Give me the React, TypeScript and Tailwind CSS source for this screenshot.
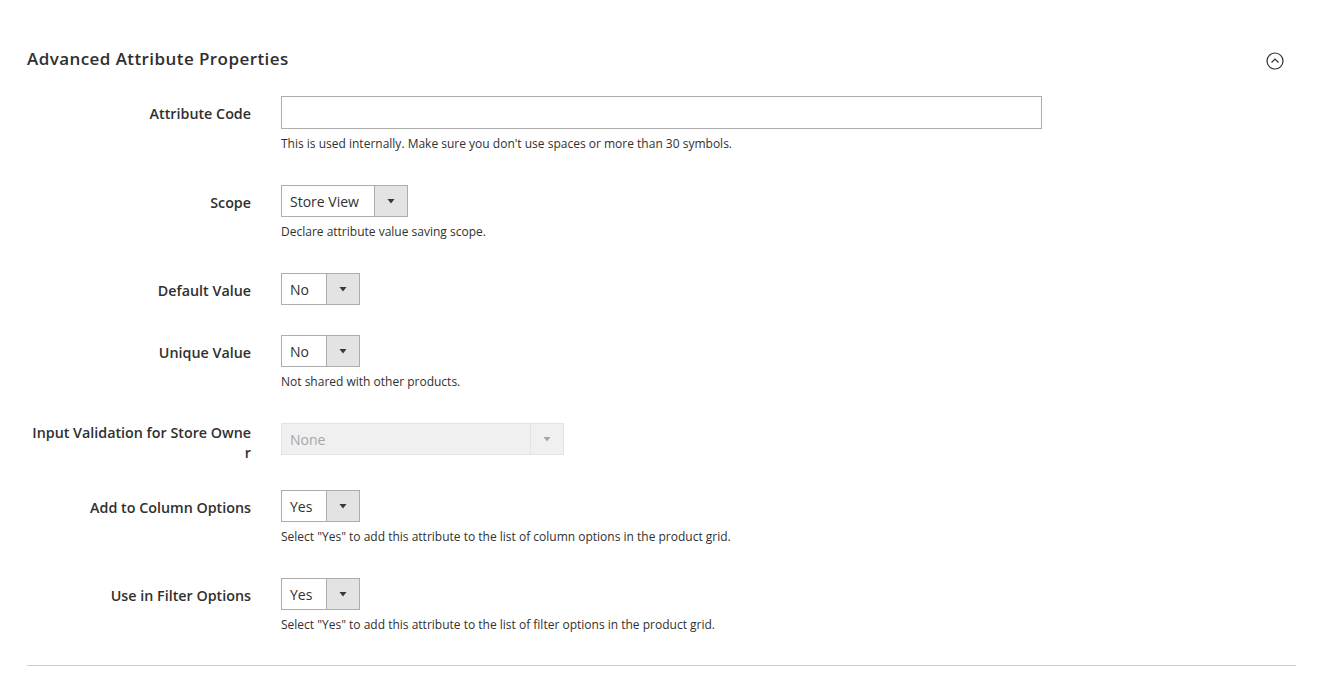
import React from 'react';

const font = { fontFamily: '"Open Sans", "Noto Sans", Arial, sans-serif' };

function Arrow({ disabled }: { disabled?: boolean }) {
  return (
    <svg width="8" height="5" viewBox="0 0 8 5" className="block">
      <path d="M0.5 0h7L4 4.5z" fill={disabled ? '#a6a6a6' : '#41362f'} />
    </svg>
  );
}

function Select({ value, textW, disabled }: { value: string; textW: string; disabled?: boolean }) {
  return (
    <div
      className={`flex h-[32px] border ${
        disabled ? 'border-[#e3e3e3] bg-[#f0f0f0] text-[#a6a6a6]' : 'border-[#adadad] bg-white text-[#303030]'
      }`}
    >
      <div className={`${textW} flex items-center pl-[8px] text-[14px]`}>{value}</div>
      <div
        className={`flex w-[33px] items-center justify-center border-l ${
          disabled ? 'border-[#e3e3e3] bg-[#f0f0f0]' : 'border-[#adadad] bg-[#e3e3e3]'
        }`}
      >
        <Arrow disabled={disabled} />
      </div>
    </div>
  );
}

function Row({
  label,
  note,
  mb,
  multi,
  children,
}: {
  label: React.ReactNode;
  note?: string;
  mb: string;
  multi?: boolean;
  children: React.ReactNode;
}) {
  return (
    <div className={`flex items-start ${mb}`}>
      <div
        className={`flex min-h-[32px] w-[224px] shrink-0 items-center justify-end text-right text-[14.3px] font-semibold leading-[20px] text-[#303030] ${
          multi ? '' : 'pt-[3px]'
        }`}
      >
        <span>{label}</span>
      </div>
      <div className="ml-[30px] flex flex-col items-start">
        {children}
        {note && <div className="mt-[6px] text-[12px] leading-[18px] text-[#303030]">{note}</div>}
      </div>
    </div>
  );
}

export default function App() {
  return (
    <div style={font} className="min-h-[680px] w-[1324px] bg-white px-[27px] pt-[47px]">
      <div className="flex items-center justify-between">
        <h2 className="text-[17px] font-semibold leading-[24px] tracking-[0.025em] text-[#303030]">
          Advanced Attribute Properties
        </h2>
        <svg width="18" height="18" viewBox="0 0 18 18" className="mr-[13px] mt-[4px]">
          <circle cx="9" cy="9" r="8" fill="none" stroke="#303030" strokeWidth="1.2" />
          <path d="M5.5 10.5L9 7l3.5 3.5" fill="none" stroke="#303030" strokeWidth="1.2" />
        </svg>
      </div>

      <div className="mt-[25px]">
        <Row
          label="Attribute Code"
          note="This is used internally. Make sure you don't use spaces or more than 30 symbols."
          mb="mb-[32px]"
        >
          <div className="h-[33px] w-[761px] border border-[#adadad] bg-white" />
        </Row>

        <Row label="Scope" note="Declare attribute value saving scope." mb="mb-[32px]">
          <Select value="Store View" textW="w-[92px]" />
        </Row>

        <Row label="Default Value" mb="mb-[30px]">
          <Select value="No" textW="w-[44px]" />
        </Row>

        <Row label="Unique Value" note="Not shared with other products." mb="mb-[32px]">
          <Select value="No" textW="w-[44px]" />
        </Row>

        <Row
          multi
          label={
            <>
              Input Validation for Store Owne
              <br />r
            </>
          }
          mb="mb-[27px]"
        >
          <Select value="None" textW="w-[248px]" disabled />
        </Row>

        <Row
          label="Add to Column Options"
          note={'Select "Yes" to add this attribute to the list of column options in the product grid.'}
          mb="mb-[32px]"
        >
          <Select value="Yes" textW="w-[44px]" />
        </Row>

        <Row
          label="Use in Filter Options"
          note={'Select "Yes" to add this attribute to the list of filter options in the product grid.'}
          mb="mb-[31px]"
        >
          <Select value="Yes" textW="w-[44px]" />
        </Row>
      </div>

      <div className="h-px w-[1269px] bg-[#cccccc]" />
    </div>
  );
}
